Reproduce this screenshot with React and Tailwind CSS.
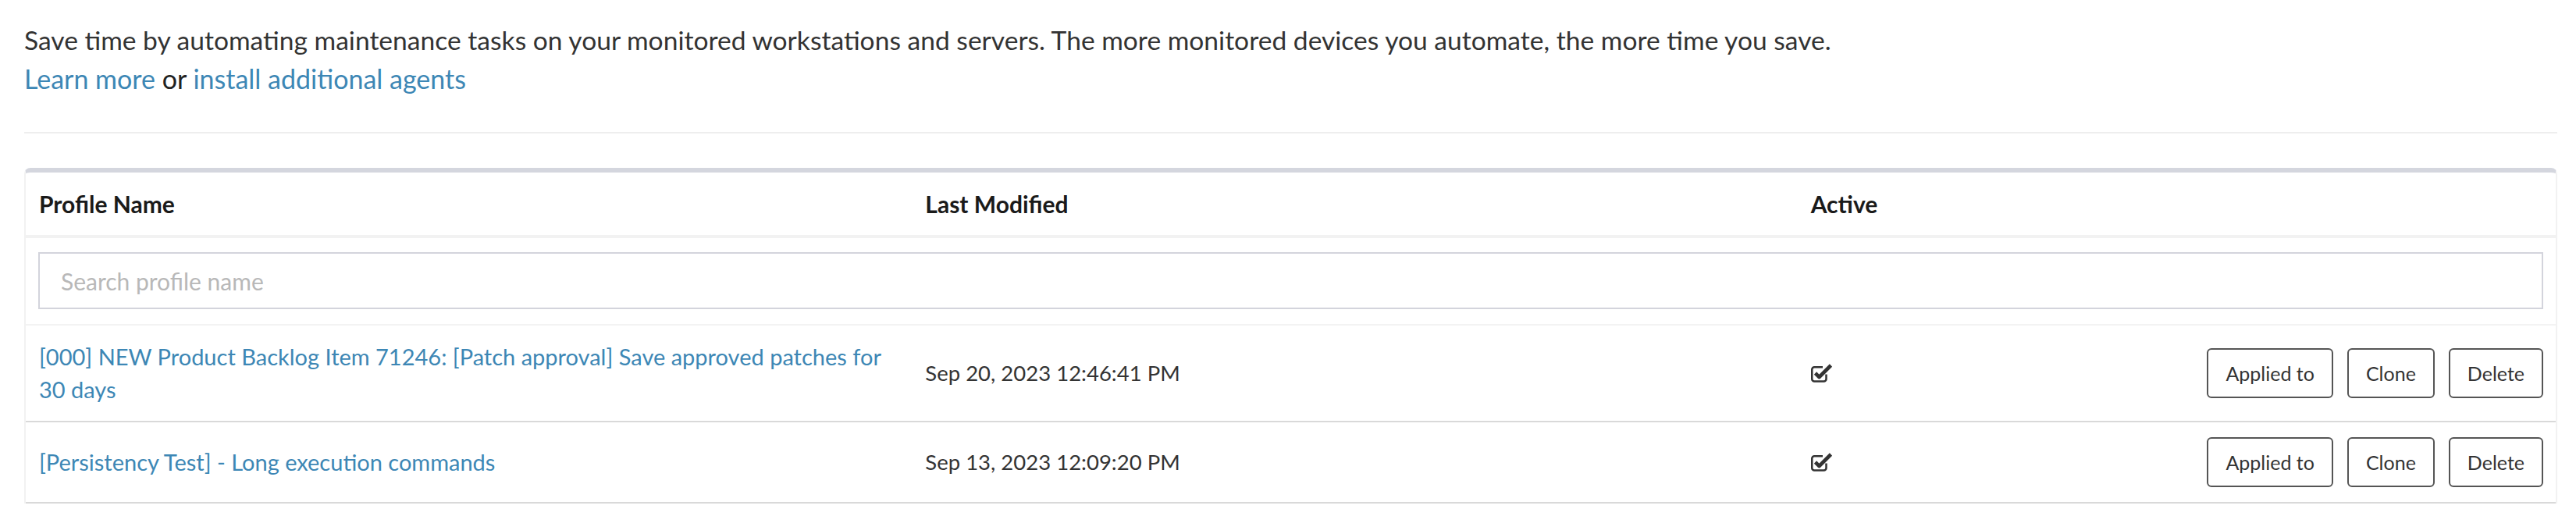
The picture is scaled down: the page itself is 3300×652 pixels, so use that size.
import React from "react";

const profiles = [
  {
    name: "[000] NEW Product Backlog Item 71246: [Patch approval] Save approved patches for 30 days",
    modified: "Sep 20, 2023 12:46:41 PM",
    active: true,
  },
  {
    name: "[Persistency Test] - Long execution commands",
    modified: "Sep 13, 2023 12:09:20 PM",
    active: true,
  },
];

function CheckSquare() {
  return (
    <svg width="29" height="26" viewBox="0 0 29 26" className="block">
      <path
        d="M19.5 14.5 V20.5 A3 3 0 0 1 16.5 23.5 H4.25 A3 3 0 0 1 1.25 20.5 V8.25 A3 3 0 0 1 4.25 5.25 H15"
        fill="none"
        stroke="#333"
        strokeWidth="2.5"
      />
      <path
        d="M5.5 13 L10.5 18 L25.5 3"
        fill="none"
        stroke="#333"
        strokeWidth="4.6"
        strokeLinejoin="round"
      />
    </svg>
  );
}

function ActionButton({ children }) {
  return (
    <button className="h-[64px] px-[22px] border-2 border-[#555555] rounded-[6px] bg-white text-[25px] text-[#333333] leading-none whitespace-nowrap">
      {children}
    </button>
  );
}

export default function App() {
  return (
    <div className="min-h-[652px] bg-white pl-[31px] pr-[24px] pt-[26px] font-['Lato',sans-serif] text-[#333333]">
      <div className="text-[33.6px] leading-[50px]">
        Save time by automating maintenance tasks on your monitored workstations and servers. The more monitored devices you
        automate, the more time you save.
      </div>
      <div className="text-[34px] leading-[50px]">
        <a className="text-[#3d87b5]">Learn more</a> <span className="text-[#222222]">or</span>{" "}
        <a className="text-[#3d87b5]">install additional agents</a>
      </div>

      <div className="mt-[43px] h-[2px] bg-[#eeeeee]" />

      <div className="mt-[44px] border-t-[6px] border-t-[#d4d6de] border-x-2 border-x-[#f2f2f2] rounded-t-[8px] overflow-hidden">
        <table className="w-full table-fixed border-collapse">
          <colgroup>
            <col className="w-[35%]" />
            <col className="w-[35%]" />
            <col className="w-[15%]" />
            <col className="w-[15%]" />
          </colgroup>
          <thead>
            <tr className="border-b-4 border-[#f2f2f2]">
              <th className="px-[17px] py-[20px] text-left text-[30px] leading-[40px] font-bold text-[#1a1a1a]">Profile Name</th>
              <th className="px-[18px] py-[20px] text-left text-[30px] leading-[40px] font-bold text-[#1a1a1a]">Last Modified</th>
              <th className="px-[18px] py-[20px] text-left text-[30px] leading-[40px] font-bold text-[#1a1a1a]">Active</th>
              <th />
            </tr>
          </thead>
          <tbody>
            <tr className="border-b-2 border-[#f3f3f3]">
              <td colSpan={4} className="px-[16px] pt-[18px] pb-[19px]">
                <input
                  type="text"
                  placeholder="Search profile name"
                  className="block w-full h-[73px] border-2 border-[#d3d4dc] pl-[27px] text-[30px] text-[#333333] placeholder:text-[#b8b8b8] outline-none"
                />
              </td>
            </tr>
            {profiles.map((p) => (
              <tr key={p.name} className="border-b-[2px] border-[#d9d9d9]">
                <td className="pl-[17px] pr-[24px] py-[19px] align-middle text-[29px] leading-[42px]">
                  <a className="text-[#3d87b5]">{p.name}</a>
                </td>
                <td className="px-[18px] py-[19px] align-middle text-[27.5px] leading-[42px] text-[#333333]">
                  {p.modified}
                </td>
                <td className="px-[18px] py-[19px] align-middle">{p.active && <CheckSquare />}</td>
                <td className="pl-[18px] pr-[16px] py-[19px] align-middle">
                  <div className="flex justify-end gap-[18px]">
                    <ActionButton>Applied to</ActionButton>
                    <ActionButton>Clone</ActionButton>
                    <ActionButton>Delete</ActionButton>
                  </div>
                </td>
              </tr>
            ))}
          </tbody>
        </table>
      </div>
    </div>
  );
}
